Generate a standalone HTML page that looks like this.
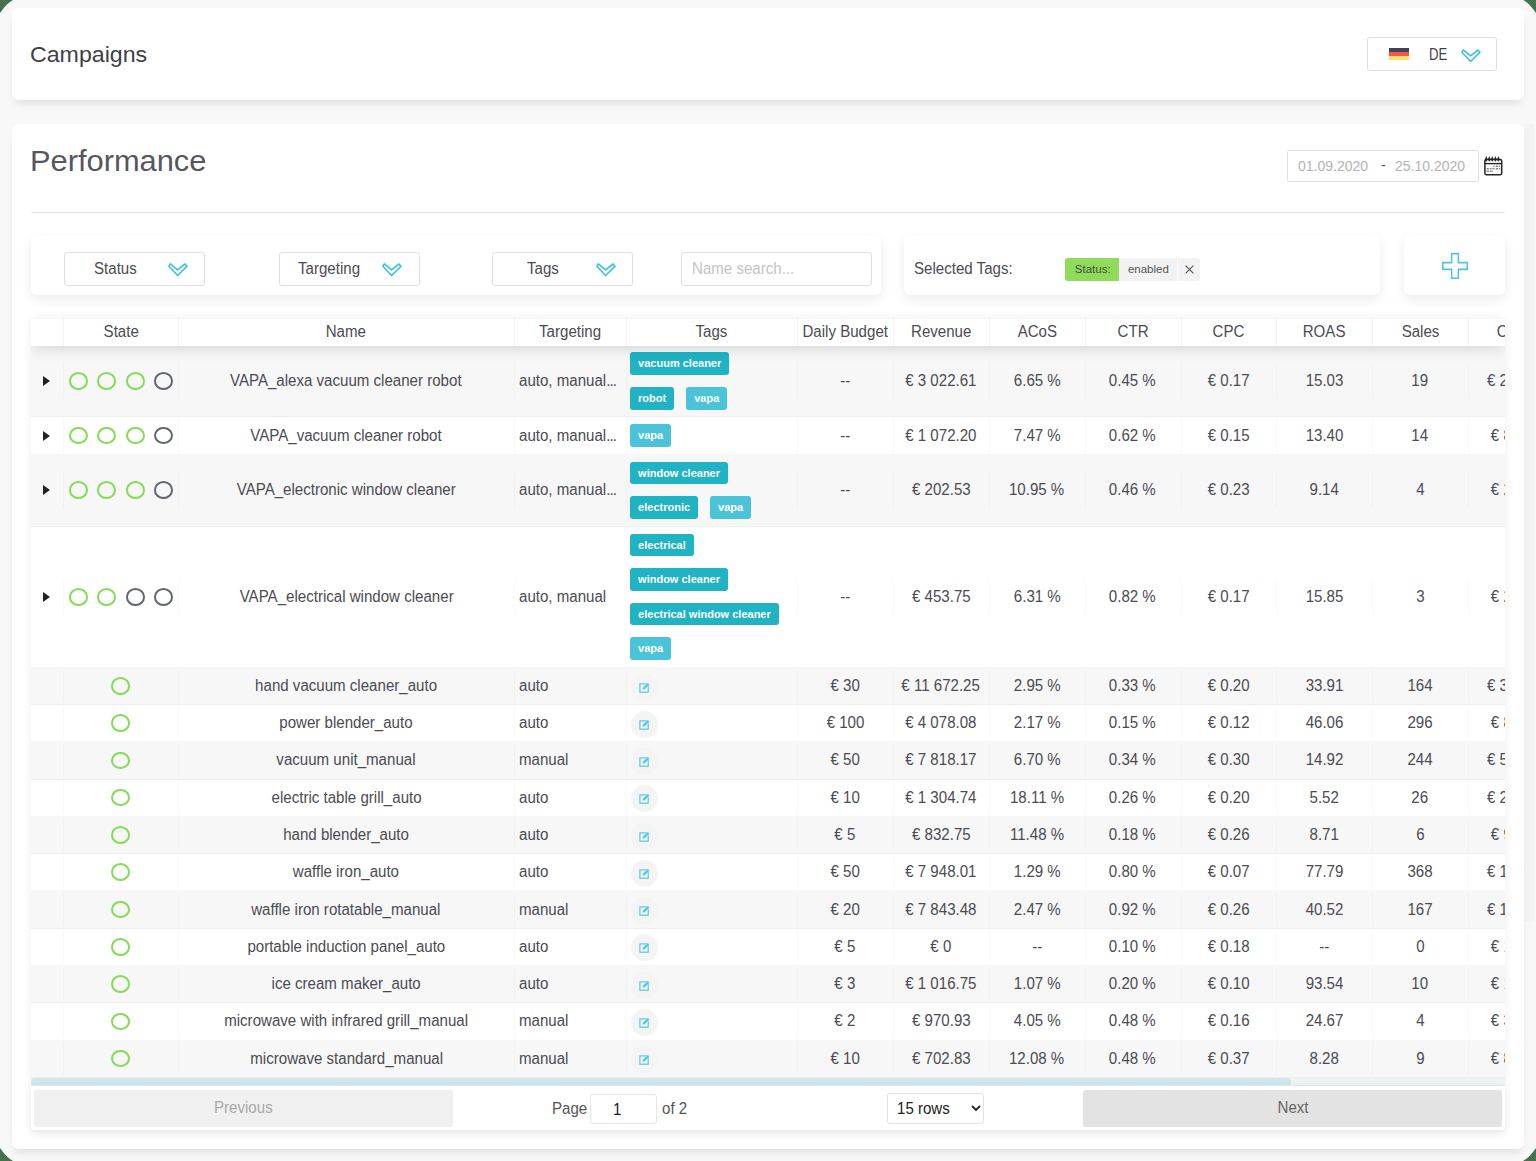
<!DOCTYPE html>
<html><head><meta charset="utf-8"><title>Campaigns</title>
<style>
*{box-sizing:border-box;margin:0;padding:0}
html,body{width:1536px;height:1161px;overflow:hidden}
body{background:#f8f8f8;font-family:"Liberation Sans",sans-serif;color:#4b4b53;font-size:15px;position:relative}
.a{position:absolute;white-space:nowrap}
.lb{font-size:15.6px;transform:scaleX(.967);transform-origin:0 50%}
.card{position:absolute;background:#fff;border-radius:7px;box-shadow:0 6px 9px -3px rgba(0,0,0,.11)}
.dd{position:absolute;border:1px solid #dfdfdf;border-radius:3px;background:#fff}
.sub{position:absolute;background:#fff;border-radius:6px;box-shadow:0 5px 12px rgba(0,0,0,.075)}
.corner{position:absolute;width:0;height:0}
.tbl{position:absolute;left:31px;top:317.8px;width:1474px;height:768px;overflow:hidden;box-shadow:0 0 10px rgba(0,0,0,.07);border-radius:4px 4px 0 0}
.thead{position:absolute;left:0;top:0;width:1474px;height:28px;background:#fff;border-top:1px solid rgba(0,0,0,.03);border-radius:4px 4px 0 0;box-shadow:0 2px 15px 0 rgba(0,0,0,.15);z-index:2}
.th{position:absolute;top:-0.7px;height:28px;line-height:28px;text-align:center;white-space:nowrap;overflow:hidden}
.hl{position:absolute;top:-1px;height:28px;width:1px;background:rgba(0,0,0,.045)}
.tr{position:absolute;left:0;width:1474px;border-bottom:1px solid rgba(0,0,0,.035)}
.odd{background:#f7f7f7}
.ev{background:#fff}
.td{position:absolute;top:0;bottom:0;display:flex;align-items:center;justify-content:center;white-space:nowrap;overflow:hidden}
.cl{position:absolute;width:1px;background:rgba(0,0,0,.025)}
.tl{justify-content:flex-start;padding-left:5px}
.tag{display:inline-block;height:22.7px;line-height:22.7px;padding:0 8px;border-radius:3px;background:#1fb3c4;color:#fff;font-weight:bold;font-size:11px;margin:5.9px 12px 5.9px 0;vertical-align:top}
.tag.l{background:#4bc4da}
.circ{display:inline-block;width:19px;height:17.6px;border:2px solid #84db57;border-radius:50%;margin:0 4.75px}
.circ.g{border-color:#62666f}
.t{display:inline-block;font-size:15.6px;transform:scaleX(.967);transform-origin:50% 50%}
.tl .t{transform-origin:0 50%}
.tri{position:absolute;left:12px;width:0;height:0;border-top:5px solid transparent;border-bottom:5px solid transparent;border-left:7px solid #222}
</style></head><body>

<svg class="a" style="left:0;top:0;z-index:9" width="1536" height="1161" viewBox="0 0 1536 1161"><g fill="#46714b"><path d="M0 0 H13 Q7 3 0 13 Z"/><path d="M1536 0 H1523 Q1529 3 1536 13 Z"/><path d="M0 1161 H13 Q7 1158 0 1148 Z"/><path d="M1536 1161 H1523 Q1529 1158 1536 1148 Z"/></g></svg>
<div class="card" style="left:12px;top:8px;width:1512px;height:92px"></div>
<div class="card" style="left:12px;top:124px;width:1512px;height:1025px"></div>
<div class="a" style="left:1524px;top:124px;width:10px;height:797px;background:rgba(0,0,0,.02)"></div>
<div class="a" style="left:30.4px;top:42px;font-size:22.6px;line-height:26px;color:#3f3f47;transform:scaleX(1.025);transform-origin:0 50%">Campaigns</div>
<div class="dd" style="left:1367px;top:37px;width:130px;height:34px">
<svg class="a" style="left:21px;top:10px" width="20" height="12"><rect x="0" y="0" width="20" height="4" fill="#3d4456"/><rect x="0" y="4" width="20" height="4" fill="#ff5350"/><rect x="0" y="8" width="20" height="4" fill="#ffe06a"/></svg>
<div class="a" style="left:61px;top:8px;font-size:16px;line-height:18px;color:#3f4150;transform:scaleX(.82);transform-origin:0 0">DE</div>
<svg width="21" height="14" viewBox="0 0 21 14" style="position:absolute;left:93px;top:11px"><path d="M2.3 0.9 L0.9 3.3 L9.6 12.5 L18.9 3.3 L17 1 L9.6 6.9 Z" fill="none" stroke="#3ec3d8" stroke-width="1.65" stroke-linejoin="round"/></svg>
</div>
<div class="a" style="left:30.1px;top:143.5px;font-size:30px;line-height:34px;color:#56565e;transform:scaleX(1.027);transform-origin:0 50%">Performance</div>
<div class="dd" style="left:1287px;top:150px;width:192px;height:32px;border-color:#e2e2e2;border-radius:2px">
<div class="a" style="left:10px;top:7px;font-size:14px;line-height:16px;color:#b3b3b3">01.09.2020</div>
<div class="a" style="left:93px;top:6px;font-size:14px;line-height:16px;color:#555">-</div>
<div class="a" style="left:107px;top:7px;font-size:14px;line-height:16px;color:#b3b3b3">25.10.2020</div>
</div>
<svg class="a" style="left:1483px;top:155px" width="21" height="22" viewBox="0 0 21 22"><rect x="1.9" y="4.4" width="16.8" height="15.4" rx="1.6" fill="none" stroke="#252525" stroke-width="1.5"/><line x1="1.9" y1="8.6" x2="18.7" y2="8.6" stroke="#252525" stroke-width="1.4"/><g fill="#252525"><path d="M1.9 4.4 L3.3 1 L4.7 4.4 L3.3 6.8 Z"/><path d="M4.9 4.4 L6.3 1 L7.7 4.4 L6.3 6.8 Z"/><path d="M7.9 4.4 L9.3 1 L10.7 4.4 L9.3 6.8 Z"/><path d="M11.0 4.4 L12.4 1 L13.8 4.4 L12.4 6.8 Z"/><path d="M14.0 4.4 L15.4 1 L16.8 4.4 L15.4 6.8 Z"/></g><g fill="#777"><rect x="10.3" y="10.6" width="1.3" height="1.3"/><rect x="12.8" y="10.6" width="2.2" height="1.3"/><rect x="15.8" y="10.6" width="1.3" height="1.3"/><rect x="3.6" y="13.1" width="2.2" height="1.3"/><rect x="6.6" y="13.1" width="1.3" height="1.3"/><rect x="8.4" y="13.1" width="1.3" height="1.3"/><rect x="10.3" y="13.1" width="1.3" height="1.3"/><rect x="12.8" y="13.1" width="2.2" height="1.3"/><rect x="15.8" y="13.1" width="1.3" height="1.3"/><rect x="3.6" y="15.5" width="2.2" height="1.3"/><rect x="6.6" y="15.5" width="1.3" height="1.3"/><rect x="8.4" y="15.5" width="1.3" height="1.3"/></g></svg>
<div class="a" style="left:31px;top:211.5px;width:1474px;height:1px;background:#e3e3e3"></div>
<div class="sub" style="left:31px;top:235px;width:850px;height:60px"></div>
<div class="dd" style="left:64px;top:252px;width:141px;height:34px;border-color:#e0e0e0"></div>
<div class="a lb" style="left:94.2px;top:260.4px;line-height:18px">Status</div>
<svg width="21" height="14" viewBox="0 0 21 14" style="position:absolute;left:167.6px;top:262.8px"><path d="M2.3 0.9 L0.9 3.3 L9.6 12.5 L18.9 3.3 L17 1 L9.6 6.9 Z" fill="none" stroke="#3ec3d8" stroke-width="1.65" stroke-linejoin="round"/></svg>
<div class="dd" style="left:279px;top:252px;width:141px;height:34px;border-color:#e0e0e0"></div>
<div class="a lb" style="left:297.7px;top:260.4px;line-height:18px">Targeting</div>
<svg width="21" height="14" viewBox="0 0 21 14" style="position:absolute;left:382px;top:262.8px"><path d="M2.3 0.9 L0.9 3.3 L9.6 12.5 L18.9 3.3 L17 1 L9.6 6.9 Z" fill="none" stroke="#3ec3d8" stroke-width="1.65" stroke-linejoin="round"/></svg>
<div class="dd" style="left:492px;top:252px;width:141px;height:34px;border-color:#e0e0e0"></div>
<div class="a lb" style="left:527.2px;top:260.4px;line-height:18px">Tags</div>
<svg width="21" height="14" viewBox="0 0 21 14" style="position:absolute;left:595.5px;top:262.8px"><path d="M2.3 0.9 L0.9 3.3 L9.6 12.5 L18.9 3.3 L17 1 L9.6 6.9 Z" fill="none" stroke="#3ec3d8" stroke-width="1.65" stroke-linejoin="round"/></svg>
<div class="dd" style="left:681px;top:252px;width:191px;height:34px;border-color:#e0e0e0"></div>
<div class="a lb" style="left:691.6px;top:260.4px;line-height:18px;color:#c4c4c4">Name search...</div>
<div class="sub" style="left:904px;top:235px;width:476px;height:60px"></div>
<div class="a lb" style="left:913.7px;top:260.4px;line-height:18px">Selected Tags:</div>
<div class="a" style="left:1065.4px;top:257.5px;width:53.6px;height:23.2px;background:#8edc5a;border-radius:3px 0 0 3px"></div>
<div class="a" style="left:1074.8px;top:263px;font-size:11.5px;line-height:13px;color:#4a4a4a">Status:</div>
<div class="a" style="left:1119px;top:257.5px;width:58px;height:23.2px;background:#f2f2f2"></div>
<div class="a" style="left:1127.9px;top:263px;font-size:11.5px;line-height:13px;color:#555">enabled</div>
<div class="a" style="left:1178px;top:257.5px;width:22px;height:23.2px;background:#f2f2f2;border-radius:0 3px 3px 0"></div>
<svg class="a" style="left:1184.5px;top:264.8px" width="9" height="9"><path d="M0.6 0.6 L8.4 8.4 M8.4 0.6 L0.6 8.4" stroke="#555" stroke-width="1.1"/></svg>
<div class="sub" style="left:1404px;top:235px;width:101px;height:60px"></div>
<svg class="a" style="left:1441.9px;top:252.5px" width="26" height="26" viewBox="0 0 25.5 25.5"><path d="M9.45 0.75 H16.05 V9.45 H24.75 V16.05 H16.05 V24.75 H9.45 V16.05 H0.75 V9.45 H9.45 Z" fill="none" stroke="#4cc6dc" stroke-width="1.5"/></svg>
<div class="tbl">
<div class="thead">
<div class="th" style="left:0.00px;width:32.40px"><span class="t"></span></div>
<div class="th" style="left:32.40px;width:115.00px"><span class="t">State</span></div>
<div class="th" style="left:147.40px;width:335.60px"><span class="t">Name</span></div>
<div class="th" style="left:483.00px;width:111.50px"><span class="t">Targeting</span></div>
<div class="th" style="left:594.50px;width:171.90px"><span class="t">Tags</span></div>
<div class="th" style="left:766.40px;width:95.80px"><span class="t">Daily Budget</span></div>
<div class="th" style="left:862.20px;width:95.80px"><span class="t">Revenue</span></div>
<div class="th" style="left:958.00px;width:95.80px"><span class="t">ACoS</span></div>
<div class="th" style="left:1053.80px;width:95.80px"><span class="t">CTR</span></div>
<div class="th" style="left:1149.60px;width:95.80px"><span class="t">CPC</span></div>
<div class="th" style="left:1245.40px;width:95.80px"><span class="t">ROAS</span></div>
<div class="th" style="left:1341.20px;width:95.80px"><span class="t">Sales</span></div>
<div class="th" style="left:1437.00px;width:95.80px"><span class="t">Costs</span></div>
<div class="hl" style="left:32.40px"></div>
<div class="hl" style="left:147.40px"></div>
<div class="hl" style="left:483.00px"></div>
<div class="hl" style="left:594.50px"></div>
<div class="hl" style="left:766.40px"></div>
<div class="hl" style="left:862.20px"></div>
<div class="hl" style="left:958.00px"></div>
<div class="hl" style="left:1053.80px"></div>
<div class="hl" style="left:1149.60px"></div>
<div class="hl" style="left:1245.40px"></div>
<div class="hl" style="left:1341.20px"></div>
<div class="hl" style="left:1437.00px"></div>
</div>
<div class="tr odd" style="top:27.90px;height:71.80px">
<div class="cl" style="left:32.40px;top:17.40px;height:36.0px"></div><div class="cl" style="left:147.40px;top:17.40px;height:36.0px"></div><div class="cl" style="left:483.00px;top:17.40px;height:36.0px"></div><div class="cl" style="left:594.50px;top:17.40px;height:36.0px"></div><div class="cl" style="left:766.40px;top:17.40px;height:36.0px"></div><div class="cl" style="left:862.20px;top:17.40px;height:36.0px"></div><div class="cl" style="left:958.00px;top:17.40px;height:36.0px"></div><div class="cl" style="left:1053.80px;top:17.40px;height:36.0px"></div><div class="cl" style="left:1149.60px;top:17.40px;height:36.0px"></div><div class="cl" style="left:1245.40px;top:17.40px;height:36.0px"></div><div class="cl" style="left:1341.20px;top:17.40px;height:36.0px"></div><div class="cl" style="left:1437.00px;top:17.40px;height:36.0px"></div>
<div class="td " style="left:0.00px;width:32.40px;"><span style="display:inline-block;width:0;height:0;border-top:5px solid transparent;border-bottom:5px solid transparent;border-left:7px solid #222;margin-left:-1px"></span></div>
<div class="td " style="left:32.40px;width:115.00px;"><span class="circ"></span><span class="circ"></span><span class="circ"></span><span class="circ g"></span></div>
<div class="td " style="left:147.40px;width:335.60px;"><span class="t">VAPA_alexa vacuum cleaner robot</span></div>
<div class="td tl" style="left:483.00px;width:111.50px;"><span class="t">auto, manual<span style="letter-spacing:-0.9px">...</span></span></div>
<div class="td tl" style="left:594.50px;width:171.90px;padding-left:4.6px"><div><div style="height:34.5px;white-space:nowrap"><span class="tag">vacuum cleaner</span></div><div style="height:34.5px;white-space:nowrap"><span class="tag">robot</span><span class="tag l">vapa</span></div></div></div>
<div class="td " style="left:766.40px;width:95.80px;"><span class="t">--</span></div>
<div class="td " style="left:862.20px;width:95.80px;"><span class="t">€ 3 022.61</span></div>
<div class="td " style="left:958.00px;width:95.80px;"><span class="t">6.65 %</span></div>
<div class="td " style="left:1053.80px;width:95.80px;"><span class="t">0.45 %</span></div>
<div class="td " style="left:1149.60px;width:95.80px;"><span class="t">€ 0.17</span></div>
<div class="td " style="left:1245.40px;width:95.80px;"><span class="t">15.03</span></div>
<div class="td " style="left:1341.20px;width:95.80px;"><span class="t">19</span></div>
<div class="td " style="left:1437.00px;width:95.80px;"><span class="t">€ 201.00</span></div>
</div>
<div class="tr ev" style="top:99.70px;height:37.20px">
<div class="cl" style="left:32.40px;top:0.10px;height:36.0px"></div><div class="cl" style="left:147.40px;top:0.10px;height:36.0px"></div><div class="cl" style="left:483.00px;top:0.10px;height:36.0px"></div><div class="cl" style="left:594.50px;top:0.10px;height:36.0px"></div><div class="cl" style="left:766.40px;top:0.10px;height:36.0px"></div><div class="cl" style="left:862.20px;top:0.10px;height:36.0px"></div><div class="cl" style="left:958.00px;top:0.10px;height:36.0px"></div><div class="cl" style="left:1053.80px;top:0.10px;height:36.0px"></div><div class="cl" style="left:1149.60px;top:0.10px;height:36.0px"></div><div class="cl" style="left:1245.40px;top:0.10px;height:36.0px"></div><div class="cl" style="left:1341.20px;top:0.10px;height:36.0px"></div><div class="cl" style="left:1437.00px;top:0.10px;height:36.0px"></div>
<div class="td " style="left:0.00px;width:32.40px;"><span style="display:inline-block;width:0;height:0;border-top:5px solid transparent;border-bottom:5px solid transparent;border-left:7px solid #222;margin-left:-1px"></span></div>
<div class="td " style="left:32.40px;width:115.00px;"><span class="circ"></span><span class="circ"></span><span class="circ"></span><span class="circ g"></span></div>
<div class="td " style="left:147.40px;width:335.60px;"><span class="t">VAPA_vacuum cleaner robot</span></div>
<div class="td tl" style="left:483.00px;width:111.50px;"><span class="t">auto, manual<span style="letter-spacing:-0.9px">...</span></span></div>
<div class="td tl" style="left:594.50px;width:171.90px;padding-left:4.6px"><div><div style="height:34.5px;white-space:nowrap"><span class="tag l">vapa</span></div></div></div>
<div class="td " style="left:766.40px;width:95.80px;"><span class="t">--</span></div>
<div class="td " style="left:862.20px;width:95.80px;"><span class="t">€ 1 072.20</span></div>
<div class="td " style="left:958.00px;width:95.80px;"><span class="t">7.47 %</span></div>
<div class="td " style="left:1053.80px;width:95.80px;"><span class="t">0.62 %</span></div>
<div class="td " style="left:1149.60px;width:95.80px;"><span class="t">€ 0.15</span></div>
<div class="td " style="left:1245.40px;width:95.80px;"><span class="t">13.40</span></div>
<div class="td " style="left:1341.20px;width:95.80px;"><span class="t">14</span></div>
<div class="td " style="left:1437.00px;width:95.80px;"><span class="t">€ 80.09</span></div>
</div>
<div class="tr odd" style="top:136.90px;height:72.10px">
<div class="cl" style="left:32.40px;top:17.55px;height:36.0px"></div><div class="cl" style="left:147.40px;top:17.55px;height:36.0px"></div><div class="cl" style="left:483.00px;top:17.55px;height:36.0px"></div><div class="cl" style="left:594.50px;top:17.55px;height:36.0px"></div><div class="cl" style="left:766.40px;top:17.55px;height:36.0px"></div><div class="cl" style="left:862.20px;top:17.55px;height:36.0px"></div><div class="cl" style="left:958.00px;top:17.55px;height:36.0px"></div><div class="cl" style="left:1053.80px;top:17.55px;height:36.0px"></div><div class="cl" style="left:1149.60px;top:17.55px;height:36.0px"></div><div class="cl" style="left:1245.40px;top:17.55px;height:36.0px"></div><div class="cl" style="left:1341.20px;top:17.55px;height:36.0px"></div><div class="cl" style="left:1437.00px;top:17.55px;height:36.0px"></div>
<div class="td " style="left:0.00px;width:32.40px;"><span style="display:inline-block;width:0;height:0;border-top:5px solid transparent;border-bottom:5px solid transparent;border-left:7px solid #222;margin-left:-1px"></span></div>
<div class="td " style="left:32.40px;width:115.00px;"><span class="circ"></span><span class="circ"></span><span class="circ"></span><span class="circ g"></span></div>
<div class="td " style="left:147.40px;width:335.60px;"><span class="t">VAPA_electronic window cleaner</span></div>
<div class="td tl" style="left:483.00px;width:111.50px;"><span class="t">auto, manual<span style="letter-spacing:-0.9px">...</span></span></div>
<div class="td tl" style="left:594.50px;width:171.90px;padding-left:4.6px"><div><div style="height:34.5px;white-space:nowrap"><span class="tag">window cleaner</span></div><div style="height:34.5px;white-space:nowrap"><span class="tag">electronic</span><span class="tag l">vapa</span></div></div></div>
<div class="td " style="left:766.40px;width:95.80px;"><span class="t">--</span></div>
<div class="td " style="left:862.20px;width:95.80px;"><span class="t">€ 202.53</span></div>
<div class="td " style="left:958.00px;width:95.80px;"><span class="t">10.95 %</span></div>
<div class="td " style="left:1053.80px;width:95.80px;"><span class="t">0.46 %</span></div>
<div class="td " style="left:1149.60px;width:95.80px;"><span class="t">€ 0.23</span></div>
<div class="td " style="left:1245.40px;width:95.80px;"><span class="t">9.14</span></div>
<div class="td " style="left:1341.20px;width:95.80px;"><span class="t">4</span></div>
<div class="td " style="left:1437.00px;width:95.80px;"><span class="t">€ 22.18</span></div>
</div>
<div class="tr ev" style="top:209.00px;height:140.90px">
<div class="cl" style="left:32.40px;top:51.95px;height:36.0px"></div><div class="cl" style="left:147.40px;top:51.95px;height:36.0px"></div><div class="cl" style="left:483.00px;top:51.95px;height:36.0px"></div><div class="cl" style="left:594.50px;top:51.95px;height:36.0px"></div><div class="cl" style="left:766.40px;top:51.95px;height:36.0px"></div><div class="cl" style="left:862.20px;top:51.95px;height:36.0px"></div><div class="cl" style="left:958.00px;top:51.95px;height:36.0px"></div><div class="cl" style="left:1053.80px;top:51.95px;height:36.0px"></div><div class="cl" style="left:1149.60px;top:51.95px;height:36.0px"></div><div class="cl" style="left:1245.40px;top:51.95px;height:36.0px"></div><div class="cl" style="left:1341.20px;top:51.95px;height:36.0px"></div><div class="cl" style="left:1437.00px;top:51.95px;height:36.0px"></div>
<div class="td " style="left:0.00px;width:32.40px;"><span style="display:inline-block;width:0;height:0;border-top:5px solid transparent;border-bottom:5px solid transparent;border-left:7px solid #222;margin-left:-1px"></span></div>
<div class="td " style="left:32.40px;width:115.00px;"><span class="circ"></span><span class="circ"></span><span class="circ g"></span><span class="circ g"></span></div>
<div class="td " style="left:147.40px;width:335.60px;"><span class="t">VAPA_electrical window cleaner</span></div>
<div class="td tl" style="left:483.00px;width:111.50px;"><span class="t">auto, manual</span></div>
<div class="td tl" style="left:594.50px;width:171.90px;padding-left:4.6px"><div><div style="height:34.5px;white-space:nowrap"><span class="tag">electrical</span></div><div style="height:34.5px;white-space:nowrap"><span class="tag">window cleaner</span></div><div style="height:34.5px;white-space:nowrap"><span class="tag">electrical window cleaner</span></div><div style="height:34.5px;white-space:nowrap"><span class="tag l">vapa</span></div></div></div>
<div class="td " style="left:766.40px;width:95.80px;"><span class="t">--</span></div>
<div class="td " style="left:862.20px;width:95.80px;"><span class="t">€ 453.75</span></div>
<div class="td " style="left:958.00px;width:95.80px;"><span class="t">6.31 %</span></div>
<div class="td " style="left:1053.80px;width:95.80px;"><span class="t">0.82 %</span></div>
<div class="td " style="left:1149.60px;width:95.80px;"><span class="t">€ 0.17</span></div>
<div class="td " style="left:1245.40px;width:95.80px;"><span class="t">15.85</span></div>
<div class="td " style="left:1341.20px;width:95.80px;"><span class="t">3</span></div>
<div class="td " style="left:1437.00px;width:95.80px;"><span class="t">€ 28.63</span></div>
</div>
<div class="tr odd" style="top:349.90px;height:37.28px">
<div class="cl" style="left:32.40px;top:1.94px;height:32.4px"></div><div class="cl" style="left:147.40px;top:1.94px;height:32.4px"></div><div class="cl" style="left:483.00px;top:1.94px;height:32.4px"></div><div class="cl" style="left:594.50px;top:1.94px;height:32.4px"></div><div class="cl" style="left:766.40px;top:1.94px;height:32.4px"></div><div class="cl" style="left:862.20px;top:1.94px;height:32.4px"></div><div class="cl" style="left:958.00px;top:1.94px;height:32.4px"></div><div class="cl" style="left:1053.80px;top:1.94px;height:32.4px"></div><div class="cl" style="left:1149.60px;top:1.94px;height:32.4px"></div><div class="cl" style="left:1245.40px;top:1.94px;height:32.4px"></div><div class="cl" style="left:1341.20px;top:1.94px;height:32.4px"></div><div class="cl" style="left:1437.00px;top:1.94px;height:32.4px"></div>
<div class="td " style="left:32.40px;width:115.00px;"><span class="circ"></span></div>
<div class="td " style="left:147.40px;width:335.60px;"><span class="t">hand vacuum cleaner_auto</span></div>
<div class="td tl" style="left:483.00px;width:111.50px;"><span class="t">auto</span></div>
<div class="td tl" style="left:594.50px;width:171.90px;padding-left:5.3px"><span style="display:inline-block;position:relative;top:1.2px;width:27px;height:27px;border-radius:50%;background:#f4f4f4"><svg style="position:absolute;left:8.6px;top:8px" width="12" height="12" viewBox="0 0 12 12"><rect x="0.9" y="1.9" width="8.3" height="8.3" fill="none" stroke="#52c6dc" stroke-width="1.15"/><path d="M3.2 8 L3.8 5.6 L8.6 0.8 L10.6 2.8 L5.8 7.6 Z" fill="#52c6dc" stroke="#fff" stroke-width="0.5"/></svg></span></div>
<div class="td " style="left:766.40px;width:95.80px;"><span class="t">€ 30</span></div>
<div class="td " style="left:862.20px;width:95.80px;"><span class="t">€ 11 672.25</span></div>
<div class="td " style="left:958.00px;width:95.80px;"><span class="t">2.95 %</span></div>
<div class="td " style="left:1053.80px;width:95.80px;"><span class="t">0.33 %</span></div>
<div class="td " style="left:1149.60px;width:95.80px;"><span class="t">€ 0.20</span></div>
<div class="td " style="left:1245.40px;width:95.80px;"><span class="t">33.91</span></div>
<div class="td " style="left:1341.20px;width:95.80px;"><span class="t">164</span></div>
<div class="td " style="left:1437.00px;width:95.80px;"><span class="t">€ 344.33</span></div>
</div>
<div class="tr ev" style="top:387.18px;height:37.28px">
<div class="cl" style="left:32.40px;top:1.94px;height:32.4px"></div><div class="cl" style="left:147.40px;top:1.94px;height:32.4px"></div><div class="cl" style="left:483.00px;top:1.94px;height:32.4px"></div><div class="cl" style="left:594.50px;top:1.94px;height:32.4px"></div><div class="cl" style="left:766.40px;top:1.94px;height:32.4px"></div><div class="cl" style="left:862.20px;top:1.94px;height:32.4px"></div><div class="cl" style="left:958.00px;top:1.94px;height:32.4px"></div><div class="cl" style="left:1053.80px;top:1.94px;height:32.4px"></div><div class="cl" style="left:1149.60px;top:1.94px;height:32.4px"></div><div class="cl" style="left:1245.40px;top:1.94px;height:32.4px"></div><div class="cl" style="left:1341.20px;top:1.94px;height:32.4px"></div><div class="cl" style="left:1437.00px;top:1.94px;height:32.4px"></div>
<div class="td " style="left:32.40px;width:115.00px;"><span class="circ"></span></div>
<div class="td " style="left:147.40px;width:335.60px;"><span class="t">power blender_auto</span></div>
<div class="td tl" style="left:483.00px;width:111.50px;"><span class="t">auto</span></div>
<div class="td tl" style="left:594.50px;width:171.90px;padding-left:5.3px"><span style="display:inline-block;position:relative;top:1.2px;width:27px;height:27px;border-radius:50%;background:#f4f4f4"><svg style="position:absolute;left:8.6px;top:8px" width="12" height="12" viewBox="0 0 12 12"><rect x="0.9" y="1.9" width="8.3" height="8.3" fill="none" stroke="#52c6dc" stroke-width="1.15"/><path d="M3.2 8 L3.8 5.6 L8.6 0.8 L10.6 2.8 L5.8 7.6 Z" fill="#52c6dc" stroke="#fff" stroke-width="0.5"/></svg></span></div>
<div class="td " style="left:766.40px;width:95.80px;"><span class="t">€ 100</span></div>
<div class="td " style="left:862.20px;width:95.80px;"><span class="t">€ 4 078.08</span></div>
<div class="td " style="left:958.00px;width:95.80px;"><span class="t">2.17 %</span></div>
<div class="td " style="left:1053.80px;width:95.80px;"><span class="t">0.15 %</span></div>
<div class="td " style="left:1149.60px;width:95.80px;"><span class="t">€ 0.12</span></div>
<div class="td " style="left:1245.40px;width:95.80px;"><span class="t">46.06</span></div>
<div class="td " style="left:1341.20px;width:95.80px;"><span class="t">296</span></div>
<div class="td " style="left:1437.00px;width:95.80px;"><span class="t">€ 88.49</span></div>
</div>
<div class="tr odd" style="top:424.46px;height:37.28px">
<div class="cl" style="left:32.40px;top:1.94px;height:32.4px"></div><div class="cl" style="left:147.40px;top:1.94px;height:32.4px"></div><div class="cl" style="left:483.00px;top:1.94px;height:32.4px"></div><div class="cl" style="left:594.50px;top:1.94px;height:32.4px"></div><div class="cl" style="left:766.40px;top:1.94px;height:32.4px"></div><div class="cl" style="left:862.20px;top:1.94px;height:32.4px"></div><div class="cl" style="left:958.00px;top:1.94px;height:32.4px"></div><div class="cl" style="left:1053.80px;top:1.94px;height:32.4px"></div><div class="cl" style="left:1149.60px;top:1.94px;height:32.4px"></div><div class="cl" style="left:1245.40px;top:1.94px;height:32.4px"></div><div class="cl" style="left:1341.20px;top:1.94px;height:32.4px"></div><div class="cl" style="left:1437.00px;top:1.94px;height:32.4px"></div>
<div class="td " style="left:32.40px;width:115.00px;"><span class="circ"></span></div>
<div class="td " style="left:147.40px;width:335.60px;"><span class="t">vacuum unit_manual</span></div>
<div class="td tl" style="left:483.00px;width:111.50px;"><span class="t">manual</span></div>
<div class="td tl" style="left:594.50px;width:171.90px;padding-left:5.3px"><span style="display:inline-block;position:relative;top:1.2px;width:27px;height:27px;border-radius:50%;background:#f4f4f4"><svg style="position:absolute;left:8.6px;top:8px" width="12" height="12" viewBox="0 0 12 12"><rect x="0.9" y="1.9" width="8.3" height="8.3" fill="none" stroke="#52c6dc" stroke-width="1.15"/><path d="M3.2 8 L3.8 5.6 L8.6 0.8 L10.6 2.8 L5.8 7.6 Z" fill="#52c6dc" stroke="#fff" stroke-width="0.5"/></svg></span></div>
<div class="td " style="left:766.40px;width:95.80px;"><span class="t">€ 50</span></div>
<div class="td " style="left:862.20px;width:95.80px;"><span class="t">€ 7 818.17</span></div>
<div class="td " style="left:958.00px;width:95.80px;"><span class="t">6.70 %</span></div>
<div class="td " style="left:1053.80px;width:95.80px;"><span class="t">0.34 %</span></div>
<div class="td " style="left:1149.60px;width:95.80px;"><span class="t">€ 0.30</span></div>
<div class="td " style="left:1245.40px;width:95.80px;"><span class="t">14.92</span></div>
<div class="td " style="left:1341.20px;width:95.80px;"><span class="t">244</span></div>
<div class="td " style="left:1437.00px;width:95.80px;"><span class="t">€ 523.82</span></div>
</div>
<div class="tr ev" style="top:461.75px;height:37.28px">
<div class="cl" style="left:32.40px;top:1.94px;height:32.4px"></div><div class="cl" style="left:147.40px;top:1.94px;height:32.4px"></div><div class="cl" style="left:483.00px;top:1.94px;height:32.4px"></div><div class="cl" style="left:594.50px;top:1.94px;height:32.4px"></div><div class="cl" style="left:766.40px;top:1.94px;height:32.4px"></div><div class="cl" style="left:862.20px;top:1.94px;height:32.4px"></div><div class="cl" style="left:958.00px;top:1.94px;height:32.4px"></div><div class="cl" style="left:1053.80px;top:1.94px;height:32.4px"></div><div class="cl" style="left:1149.60px;top:1.94px;height:32.4px"></div><div class="cl" style="left:1245.40px;top:1.94px;height:32.4px"></div><div class="cl" style="left:1341.20px;top:1.94px;height:32.4px"></div><div class="cl" style="left:1437.00px;top:1.94px;height:32.4px"></div>
<div class="td " style="left:32.40px;width:115.00px;"><span class="circ"></span></div>
<div class="td " style="left:147.40px;width:335.60px;"><span class="t">electric table grill_auto</span></div>
<div class="td tl" style="left:483.00px;width:111.50px;"><span class="t">auto</span></div>
<div class="td tl" style="left:594.50px;width:171.90px;padding-left:5.3px"><span style="display:inline-block;position:relative;top:1.2px;width:27px;height:27px;border-radius:50%;background:#f4f4f4"><svg style="position:absolute;left:8.6px;top:8px" width="12" height="12" viewBox="0 0 12 12"><rect x="0.9" y="1.9" width="8.3" height="8.3" fill="none" stroke="#52c6dc" stroke-width="1.15"/><path d="M3.2 8 L3.8 5.6 L8.6 0.8 L10.6 2.8 L5.8 7.6 Z" fill="#52c6dc" stroke="#fff" stroke-width="0.5"/></svg></span></div>
<div class="td " style="left:766.40px;width:95.80px;"><span class="t">€ 10</span></div>
<div class="td " style="left:862.20px;width:95.80px;"><span class="t">€ 1 304.74</span></div>
<div class="td " style="left:958.00px;width:95.80px;"><span class="t">18.11 %</span></div>
<div class="td " style="left:1053.80px;width:95.80px;"><span class="t">0.26 %</span></div>
<div class="td " style="left:1149.60px;width:95.80px;"><span class="t">€ 0.20</span></div>
<div class="td " style="left:1245.40px;width:95.80px;"><span class="t">5.52</span></div>
<div class="td " style="left:1341.20px;width:95.80px;"><span class="t">26</span></div>
<div class="td " style="left:1437.00px;width:95.80px;"><span class="t">€ 236.29</span></div>
</div>
<div class="tr odd" style="top:499.03px;height:37.28px">
<div class="cl" style="left:32.40px;top:1.94px;height:32.4px"></div><div class="cl" style="left:147.40px;top:1.94px;height:32.4px"></div><div class="cl" style="left:483.00px;top:1.94px;height:32.4px"></div><div class="cl" style="left:594.50px;top:1.94px;height:32.4px"></div><div class="cl" style="left:766.40px;top:1.94px;height:32.4px"></div><div class="cl" style="left:862.20px;top:1.94px;height:32.4px"></div><div class="cl" style="left:958.00px;top:1.94px;height:32.4px"></div><div class="cl" style="left:1053.80px;top:1.94px;height:32.4px"></div><div class="cl" style="left:1149.60px;top:1.94px;height:32.4px"></div><div class="cl" style="left:1245.40px;top:1.94px;height:32.4px"></div><div class="cl" style="left:1341.20px;top:1.94px;height:32.4px"></div><div class="cl" style="left:1437.00px;top:1.94px;height:32.4px"></div>
<div class="td " style="left:32.40px;width:115.00px;"><span class="circ"></span></div>
<div class="td " style="left:147.40px;width:335.60px;"><span class="t">hand blender_auto</span></div>
<div class="td tl" style="left:483.00px;width:111.50px;"><span class="t">auto</span></div>
<div class="td tl" style="left:594.50px;width:171.90px;padding-left:5.3px"><span style="display:inline-block;position:relative;top:1.2px;width:27px;height:27px;border-radius:50%;background:#f4f4f4"><svg style="position:absolute;left:8.6px;top:8px" width="12" height="12" viewBox="0 0 12 12"><rect x="0.9" y="1.9" width="8.3" height="8.3" fill="none" stroke="#52c6dc" stroke-width="1.15"/><path d="M3.2 8 L3.8 5.6 L8.6 0.8 L10.6 2.8 L5.8 7.6 Z" fill="#52c6dc" stroke="#fff" stroke-width="0.5"/></svg></span></div>
<div class="td " style="left:766.40px;width:95.80px;"><span class="t">€ 5</span></div>
<div class="td " style="left:862.20px;width:95.80px;"><span class="t">€ 832.75</span></div>
<div class="td " style="left:958.00px;width:95.80px;"><span class="t">11.48 %</span></div>
<div class="td " style="left:1053.80px;width:95.80px;"><span class="t">0.18 %</span></div>
<div class="td " style="left:1149.60px;width:95.80px;"><span class="t">€ 0.26</span></div>
<div class="td " style="left:1245.40px;width:95.80px;"><span class="t">8.71</span></div>
<div class="td " style="left:1341.20px;width:95.80px;"><span class="t">6</span></div>
<div class="td " style="left:1437.00px;width:95.80px;"><span class="t">€ 95.60</span></div>
</div>
<div class="tr ev" style="top:536.31px;height:37.28px">
<div class="cl" style="left:32.40px;top:1.94px;height:32.4px"></div><div class="cl" style="left:147.40px;top:1.94px;height:32.4px"></div><div class="cl" style="left:483.00px;top:1.94px;height:32.4px"></div><div class="cl" style="left:594.50px;top:1.94px;height:32.4px"></div><div class="cl" style="left:766.40px;top:1.94px;height:32.4px"></div><div class="cl" style="left:862.20px;top:1.94px;height:32.4px"></div><div class="cl" style="left:958.00px;top:1.94px;height:32.4px"></div><div class="cl" style="left:1053.80px;top:1.94px;height:32.4px"></div><div class="cl" style="left:1149.60px;top:1.94px;height:32.4px"></div><div class="cl" style="left:1245.40px;top:1.94px;height:32.4px"></div><div class="cl" style="left:1341.20px;top:1.94px;height:32.4px"></div><div class="cl" style="left:1437.00px;top:1.94px;height:32.4px"></div>
<div class="td " style="left:32.40px;width:115.00px;"><span class="circ"></span></div>
<div class="td " style="left:147.40px;width:335.60px;"><span class="t">waffle iron_auto</span></div>
<div class="td tl" style="left:483.00px;width:111.50px;"><span class="t">auto</span></div>
<div class="td tl" style="left:594.50px;width:171.90px;padding-left:5.3px"><span style="display:inline-block;position:relative;top:1.2px;width:27px;height:27px;border-radius:50%;background:#f4f4f4"><svg style="position:absolute;left:8.6px;top:8px" width="12" height="12" viewBox="0 0 12 12"><rect x="0.9" y="1.9" width="8.3" height="8.3" fill="none" stroke="#52c6dc" stroke-width="1.15"/><path d="M3.2 8 L3.8 5.6 L8.6 0.8 L10.6 2.8 L5.8 7.6 Z" fill="#52c6dc" stroke="#fff" stroke-width="0.5"/></svg></span></div>
<div class="td " style="left:766.40px;width:95.80px;"><span class="t">€ 50</span></div>
<div class="td " style="left:862.20px;width:95.80px;"><span class="t">€ 7 948.01</span></div>
<div class="td " style="left:958.00px;width:95.80px;"><span class="t">1.29 %</span></div>
<div class="td " style="left:1053.80px;width:95.80px;"><span class="t">0.80 %</span></div>
<div class="td " style="left:1149.60px;width:95.80px;"><span class="t">€ 0.07</span></div>
<div class="td " style="left:1245.40px;width:95.80px;"><span class="t">77.79</span></div>
<div class="td " style="left:1341.20px;width:95.80px;"><span class="t">368</span></div>
<div class="td " style="left:1437.00px;width:95.80px;"><span class="t">€ 102.53</span></div>
</div>
<div class="tr odd" style="top:573.59px;height:37.28px">
<div class="cl" style="left:32.40px;top:1.94px;height:32.4px"></div><div class="cl" style="left:147.40px;top:1.94px;height:32.4px"></div><div class="cl" style="left:483.00px;top:1.94px;height:32.4px"></div><div class="cl" style="left:594.50px;top:1.94px;height:32.4px"></div><div class="cl" style="left:766.40px;top:1.94px;height:32.4px"></div><div class="cl" style="left:862.20px;top:1.94px;height:32.4px"></div><div class="cl" style="left:958.00px;top:1.94px;height:32.4px"></div><div class="cl" style="left:1053.80px;top:1.94px;height:32.4px"></div><div class="cl" style="left:1149.60px;top:1.94px;height:32.4px"></div><div class="cl" style="left:1245.40px;top:1.94px;height:32.4px"></div><div class="cl" style="left:1341.20px;top:1.94px;height:32.4px"></div><div class="cl" style="left:1437.00px;top:1.94px;height:32.4px"></div>
<div class="td " style="left:32.40px;width:115.00px;"><span class="circ"></span></div>
<div class="td " style="left:147.40px;width:335.60px;"><span class="t">waffle iron rotatable_manual</span></div>
<div class="td tl" style="left:483.00px;width:111.50px;"><span class="t">manual</span></div>
<div class="td tl" style="left:594.50px;width:171.90px;padding-left:5.3px"><span style="display:inline-block;position:relative;top:1.2px;width:27px;height:27px;border-radius:50%;background:#f4f4f4"><svg style="position:absolute;left:8.6px;top:8px" width="12" height="12" viewBox="0 0 12 12"><rect x="0.9" y="1.9" width="8.3" height="8.3" fill="none" stroke="#52c6dc" stroke-width="1.15"/><path d="M3.2 8 L3.8 5.6 L8.6 0.8 L10.6 2.8 L5.8 7.6 Z" fill="#52c6dc" stroke="#fff" stroke-width="0.5"/></svg></span></div>
<div class="td " style="left:766.40px;width:95.80px;"><span class="t">€ 20</span></div>
<div class="td " style="left:862.20px;width:95.80px;"><span class="t">€ 7 843.48</span></div>
<div class="td " style="left:958.00px;width:95.80px;"><span class="t">2.47 %</span></div>
<div class="td " style="left:1053.80px;width:95.80px;"><span class="t">0.92 %</span></div>
<div class="td " style="left:1149.60px;width:95.80px;"><span class="t">€ 0.26</span></div>
<div class="td " style="left:1245.40px;width:95.80px;"><span class="t">40.52</span></div>
<div class="td " style="left:1341.20px;width:95.80px;"><span class="t">167</span></div>
<div class="td " style="left:1437.00px;width:95.80px;"><span class="t">€ 193.73</span></div>
</div>
<div class="tr ev" style="top:610.87px;height:37.28px">
<div class="cl" style="left:32.40px;top:1.94px;height:32.4px"></div><div class="cl" style="left:147.40px;top:1.94px;height:32.4px"></div><div class="cl" style="left:483.00px;top:1.94px;height:32.4px"></div><div class="cl" style="left:594.50px;top:1.94px;height:32.4px"></div><div class="cl" style="left:766.40px;top:1.94px;height:32.4px"></div><div class="cl" style="left:862.20px;top:1.94px;height:32.4px"></div><div class="cl" style="left:958.00px;top:1.94px;height:32.4px"></div><div class="cl" style="left:1053.80px;top:1.94px;height:32.4px"></div><div class="cl" style="left:1149.60px;top:1.94px;height:32.4px"></div><div class="cl" style="left:1245.40px;top:1.94px;height:32.4px"></div><div class="cl" style="left:1341.20px;top:1.94px;height:32.4px"></div><div class="cl" style="left:1437.00px;top:1.94px;height:32.4px"></div>
<div class="td " style="left:32.40px;width:115.00px;"><span class="circ"></span></div>
<div class="td " style="left:147.40px;width:335.60px;"><span class="t">portable induction panel_auto</span></div>
<div class="td tl" style="left:483.00px;width:111.50px;"><span class="t">auto</span></div>
<div class="td tl" style="left:594.50px;width:171.90px;padding-left:5.3px"><span style="display:inline-block;position:relative;top:1.2px;width:27px;height:27px;border-radius:50%;background:#f4f4f4"><svg style="position:absolute;left:8.6px;top:8px" width="12" height="12" viewBox="0 0 12 12"><rect x="0.9" y="1.9" width="8.3" height="8.3" fill="none" stroke="#52c6dc" stroke-width="1.15"/><path d="M3.2 8 L3.8 5.6 L8.6 0.8 L10.6 2.8 L5.8 7.6 Z" fill="#52c6dc" stroke="#fff" stroke-width="0.5"/></svg></span></div>
<div class="td " style="left:766.40px;width:95.80px;"><span class="t">€ 5</span></div>
<div class="td " style="left:862.20px;width:95.80px;"><span class="t">€ 0</span></div>
<div class="td " style="left:958.00px;width:95.80px;"><span class="t">--</span></div>
<div class="td " style="left:1053.80px;width:95.80px;"><span class="t">0.10 %</span></div>
<div class="td " style="left:1149.60px;width:95.80px;"><span class="t">€ 0.18</span></div>
<div class="td " style="left:1245.40px;width:95.80px;"><span class="t">--</span></div>
<div class="td " style="left:1341.20px;width:95.80px;"><span class="t">0</span></div>
<div class="td " style="left:1437.00px;width:95.80px;"><span class="t">€ 15.12</span></div>
</div>
<div class="tr odd" style="top:648.15px;height:37.28px">
<div class="cl" style="left:32.40px;top:1.94px;height:32.4px"></div><div class="cl" style="left:147.40px;top:1.94px;height:32.4px"></div><div class="cl" style="left:483.00px;top:1.94px;height:32.4px"></div><div class="cl" style="left:594.50px;top:1.94px;height:32.4px"></div><div class="cl" style="left:766.40px;top:1.94px;height:32.4px"></div><div class="cl" style="left:862.20px;top:1.94px;height:32.4px"></div><div class="cl" style="left:958.00px;top:1.94px;height:32.4px"></div><div class="cl" style="left:1053.80px;top:1.94px;height:32.4px"></div><div class="cl" style="left:1149.60px;top:1.94px;height:32.4px"></div><div class="cl" style="left:1245.40px;top:1.94px;height:32.4px"></div><div class="cl" style="left:1341.20px;top:1.94px;height:32.4px"></div><div class="cl" style="left:1437.00px;top:1.94px;height:32.4px"></div>
<div class="td " style="left:32.40px;width:115.00px;"><span class="circ"></span></div>
<div class="td " style="left:147.40px;width:335.60px;"><span class="t">ice cream maker_auto</span></div>
<div class="td tl" style="left:483.00px;width:111.50px;"><span class="t">auto</span></div>
<div class="td tl" style="left:594.50px;width:171.90px;padding-left:5.3px"><span style="display:inline-block;position:relative;top:1.2px;width:27px;height:27px;border-radius:50%;background:#f4f4f4"><svg style="position:absolute;left:8.6px;top:8px" width="12" height="12" viewBox="0 0 12 12"><rect x="0.9" y="1.9" width="8.3" height="8.3" fill="none" stroke="#52c6dc" stroke-width="1.15"/><path d="M3.2 8 L3.8 5.6 L8.6 0.8 L10.6 2.8 L5.8 7.6 Z" fill="#52c6dc" stroke="#fff" stroke-width="0.5"/></svg></span></div>
<div class="td " style="left:766.40px;width:95.80px;"><span class="t">€ 3</span></div>
<div class="td " style="left:862.20px;width:95.80px;"><span class="t">€ 1 016.75</span></div>
<div class="td " style="left:958.00px;width:95.80px;"><span class="t">1.07 %</span></div>
<div class="td " style="left:1053.80px;width:95.80px;"><span class="t">0.20 %</span></div>
<div class="td " style="left:1149.60px;width:95.80px;"><span class="t">€ 0.10</span></div>
<div class="td " style="left:1245.40px;width:95.80px;"><span class="t">93.54</span></div>
<div class="td " style="left:1341.20px;width:95.80px;"><span class="t">10</span></div>
<div class="td " style="left:1437.00px;width:95.80px;"><span class="t">€ 10.88</span></div>
</div>
<div class="tr ev" style="top:685.44px;height:37.28px">
<div class="cl" style="left:32.40px;top:1.94px;height:32.4px"></div><div class="cl" style="left:147.40px;top:1.94px;height:32.4px"></div><div class="cl" style="left:483.00px;top:1.94px;height:32.4px"></div><div class="cl" style="left:594.50px;top:1.94px;height:32.4px"></div><div class="cl" style="left:766.40px;top:1.94px;height:32.4px"></div><div class="cl" style="left:862.20px;top:1.94px;height:32.4px"></div><div class="cl" style="left:958.00px;top:1.94px;height:32.4px"></div><div class="cl" style="left:1053.80px;top:1.94px;height:32.4px"></div><div class="cl" style="left:1149.60px;top:1.94px;height:32.4px"></div><div class="cl" style="left:1245.40px;top:1.94px;height:32.4px"></div><div class="cl" style="left:1341.20px;top:1.94px;height:32.4px"></div><div class="cl" style="left:1437.00px;top:1.94px;height:32.4px"></div>
<div class="td " style="left:32.40px;width:115.00px;"><span class="circ"></span></div>
<div class="td " style="left:147.40px;width:335.60px;"><span class="t">microwave with infrared grill_manual</span></div>
<div class="td tl" style="left:483.00px;width:111.50px;"><span class="t">manual</span></div>
<div class="td tl" style="left:594.50px;width:171.90px;padding-left:5.3px"><span style="display:inline-block;position:relative;top:1.2px;width:27px;height:27px;border-radius:50%;background:#f4f4f4"><svg style="position:absolute;left:8.6px;top:8px" width="12" height="12" viewBox="0 0 12 12"><rect x="0.9" y="1.9" width="8.3" height="8.3" fill="none" stroke="#52c6dc" stroke-width="1.15"/><path d="M3.2 8 L3.8 5.6 L8.6 0.8 L10.6 2.8 L5.8 7.6 Z" fill="#52c6dc" stroke="#fff" stroke-width="0.5"/></svg></span></div>
<div class="td " style="left:766.40px;width:95.80px;"><span class="t">€ 2</span></div>
<div class="td " style="left:862.20px;width:95.80px;"><span class="t">€ 970.93</span></div>
<div class="td " style="left:958.00px;width:95.80px;"><span class="t">4.05 %</span></div>
<div class="td " style="left:1053.80px;width:95.80px;"><span class="t">0.48 %</span></div>
<div class="td " style="left:1149.60px;width:95.80px;"><span class="t">€ 0.16</span></div>
<div class="td " style="left:1245.40px;width:95.80px;"><span class="t">24.67</span></div>
<div class="td " style="left:1341.20px;width:95.80px;"><span class="t">4</span></div>
<div class="td " style="left:1437.00px;width:95.80px;"><span class="t">€ 39.32</span></div>
</div>
<div class="tr odd" style="top:722.72px;height:37.28px">
<div class="cl" style="left:32.40px;top:1.94px;height:32.4px"></div><div class="cl" style="left:147.40px;top:1.94px;height:32.4px"></div><div class="cl" style="left:483.00px;top:1.94px;height:32.4px"></div><div class="cl" style="left:594.50px;top:1.94px;height:32.4px"></div><div class="cl" style="left:766.40px;top:1.94px;height:32.4px"></div><div class="cl" style="left:862.20px;top:1.94px;height:32.4px"></div><div class="cl" style="left:958.00px;top:1.94px;height:32.4px"></div><div class="cl" style="left:1053.80px;top:1.94px;height:32.4px"></div><div class="cl" style="left:1149.60px;top:1.94px;height:32.4px"></div><div class="cl" style="left:1245.40px;top:1.94px;height:32.4px"></div><div class="cl" style="left:1341.20px;top:1.94px;height:32.4px"></div><div class="cl" style="left:1437.00px;top:1.94px;height:32.4px"></div>
<div class="td " style="left:32.40px;width:115.00px;"><span class="circ"></span></div>
<div class="td " style="left:147.40px;width:335.60px;"><span class="t">microwave standard_manual</span></div>
<div class="td tl" style="left:483.00px;width:111.50px;"><span class="t">manual</span></div>
<div class="td tl" style="left:594.50px;width:171.90px;padding-left:5.3px"><span style="display:inline-block;position:relative;top:1.2px;width:27px;height:27px;border-radius:50%;background:#f4f4f4"><svg style="position:absolute;left:8.6px;top:8px" width="12" height="12" viewBox="0 0 12 12"><rect x="0.9" y="1.9" width="8.3" height="8.3" fill="none" stroke="#52c6dc" stroke-width="1.15"/><path d="M3.2 8 L3.8 5.6 L8.6 0.8 L10.6 2.8 L5.8 7.6 Z" fill="#52c6dc" stroke="#fff" stroke-width="0.5"/></svg></span></div>
<div class="td " style="left:766.40px;width:95.80px;"><span class="t">€ 10</span></div>
<div class="td " style="left:862.20px;width:95.80px;"><span class="t">€ 702.83</span></div>
<div class="td " style="left:958.00px;width:95.80px;"><span class="t">12.08 %</span></div>
<div class="td " style="left:1053.80px;width:95.80px;"><span class="t">0.48 %</span></div>
<div class="td " style="left:1149.60px;width:95.80px;"><span class="t">€ 0.37</span></div>
<div class="td " style="left:1245.40px;width:95.80px;"><span class="t">8.28</span></div>
<div class="td " style="left:1341.20px;width:95.80px;"><span class="t">9</span></div>
<div class="td " style="left:1437.00px;width:95.80px;"><span class="t">€ 84.90</span></div>
</div>
<div class="a" style="left:0;top:760.00px;width:1474px;height:8px;background:#eef3f4"></div>
<div class="a" style="left:0;top:760.00px;width:1260px;height:7.8px;background:#cde7ed;border-radius:4px"></div>
</div>
<div class="a" style="left:31px;top:1085.4px;width:1474px;height:44.6px;background:#fff;border-top:1.6px solid #e6e6e6;border-radius:0 0 4px 4px;box-shadow:0 3px 9px rgba(0,0,0,.11)"></div>
<div class="a" style="left:33.8px;top:1090.2px;width:419px;height:37.2px;background:#f0f0f0;border-radius:3px;text-align:center;line-height:35.4px;color:#a9a9a9"><span class="t">Previous</span></div>
<div class="a" style="left:1083.4px;top:1090.2px;width:419px;height:37.2px;background:#e3e3e3;border-radius:3px;text-align:center;line-height:35.4px;color:#666"><span class="t">Next</span></div>
<div class="a lb" style="left:552px;top:1100.3px;line-height:18px;color:#555">Page</div>
<div class="a" style="left:590.3px;top:1094.4px;width:66.4px;height:29.2px;border:1px solid #e6e6e6;border-radius:3px;color:#222"><span class="a lb" style="left:21.5px;top:5.9px;line-height:18px">1</span></div>
<div class="a lb" style="left:661.6px;top:1100.3px;line-height:18px;color:#555">of 2</div>
<div class="a" style="left:886.5px;top:1092.9px;width:97px;height:31.6px;border:1px solid #e3e3e3;border-radius:3px;background:#fff"></div>
<div class="a lb" style="left:897.2px;top:1100.3px;line-height:18px;color:#222">15 rows</div>
<svg class="a" style="left:970.6px;top:1105px" width="10" height="7"><path d="M1 1 L5 5 L9 1" fill="none" stroke="#222" stroke-width="1.8"/></svg>
</body></html>
